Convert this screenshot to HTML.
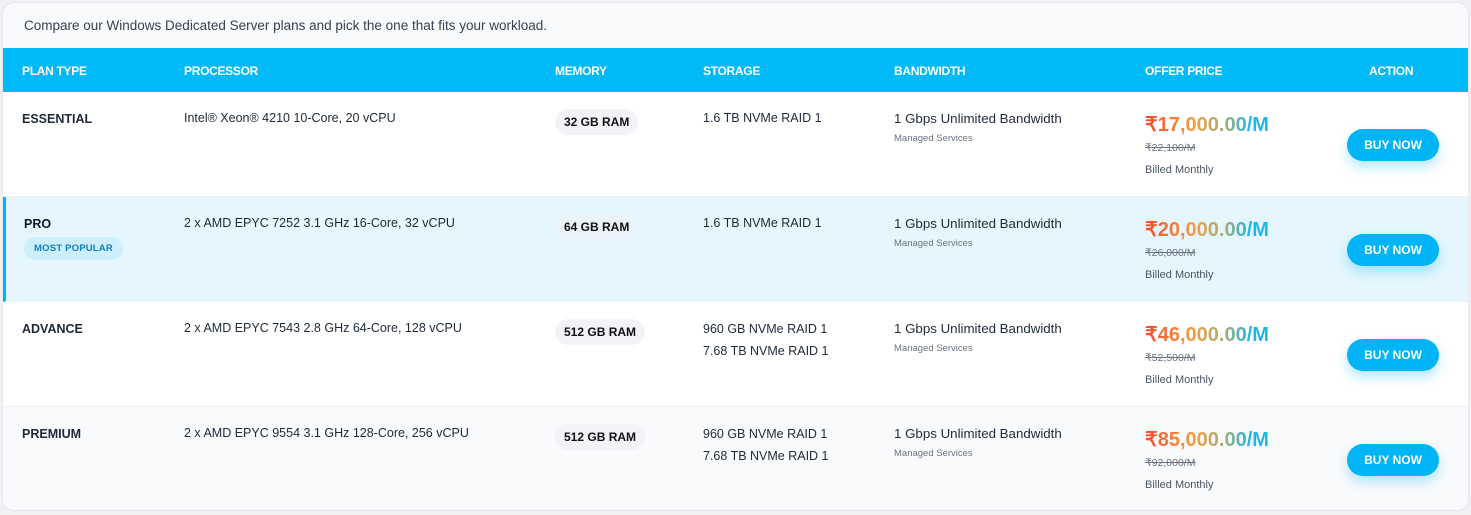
<!DOCTYPE html>
<html><head><meta charset="utf-8"><style>
*{box-sizing:border-box;margin:0;padding:0}
body{width:1471px;height:515px;background:#f0f1f3;font-family:"Liberation Sans",sans-serif;color:#1f2937;overflow:hidden;position:relative}
.box{position:absolute;left:2px;top:2px;width:1467px;height:509px;background:#f9fafb;border:1px solid #e5e7eb;border-radius:12px;overflow:hidden}
.intro{position:absolute;left:21px;top:15px;font-size:13.5px;color:#374151}
.hdr{position:absolute;left:0;top:45px;width:100%;height:44px;background:#00b9f7}
.hdr span{position:absolute;top:16px;font-size:12px;font-weight:bold;color:#fff;letter-spacing:-0.3px}
.row{position:absolute;left:0;width:100%;height:105px;border-bottom:1px solid #eef0f3}
.row .c{position:absolute;font-size:12.5px;color:#1f2937}
.plan{font-size:12.5px;font-weight:bold;color:#111827}
.pill{position:absolute;height:26px;border-radius:13px;background:#f1f3f7;font-size:12px;font-weight:bold;padding:0 9px;line-height:26px;color:#111}
.bw{font-size:13.3px;color:#1f2937}
.ms{font-size:9.5px;color:#6b7280;margin-top:7px}
.price{font-size:20px;font-weight:bold;background:linear-gradient(90deg,#f04e2d 0%,#f59e42 40%,#9db07a 65%,#1fb6e8 85%);-webkit-background-clip:text;background-clip:text;color:transparent;display:inline-block}
.old{font-size:10.5px;color:#6b7280;text-decoration:line-through;margin-top:5px}
.bill{font-size:11px;color:#4b5563;margin-top:10px}
.btn{position:absolute;left:1344px;width:92px;height:32px;border-radius:16px;background:#00b4f5;color:#fff;font-size:12px;font-weight:bold;text-align:center;line-height:32px;box-shadow:0 6px 12px rgba(0,180,245,0.3)}
.tag{display:inline-block;margin-top:6px;height:23px;line-height:23px;padding:0 10px;border-radius:12px;background:#cdeefd;color:#0a7fc2;font-size:9.5px;font-weight:bold;letter-spacing:0.2px}
</style></head><body>
<div class="box">
<div class="intro">Compare our Windows Dedicated Server plans and pick the one that fits your workload.</div>
<div class="hdr">
<span style="left:19px">PLAN TYPE</span><span style="left:181px">PROCESSOR</span><span style="left:552px">MEMORY</span><span style="left:700px">STORAGE</span><span style="left:891px">BANDWIDTH</span><span style="left:1142px">OFFER PRICE</span><span style="left:1366px">ACTION</span>
</div>

<div class="row" style="top:89px;background:#fff">
<div class="c plan" style="left:19px;top:20px">ESSENTIAL</div>
<div class="c" style="left:181px;top:19px">Intel® Xeon® 4210 10-Core, 20 vCPU</div>
<div class="pill" style="left:552px;top:17px">32 GB RAM</div>
<div class="c" style="left:700px;top:19px">1.6 TB NVMe RAID 1</div>
<div class="c" style="left:891px;top:19px"><div class="bw">1 Gbps Unlimited Bandwidth</div><div class="ms">Managed Services</div></div>
<div class="c" style="left:1142px;top:20px"><div class="price">₹17,000.00/M</div><div class="old">₹22,100/M</div><div class="bill">Billed Monthly</div></div>
<div class="btn" style="top:37px">BUY NOW</div>
</div>

<div class="row" style="top:194px;background:#e5f6fe;border-left:3px solid #00b4f5">
<div class="c" style="left:18px;top:20px"><div class="plan">PRO</div><div class="tag">MOST POPULAR</div></div>
<div class="c" style="left:178px;top:19px">2 x AMD EPYC 7252 3.1 GHz 16-Core, 32 vCPU</div>
<div class="pill" style="left:549px;top:17px;background:#e9f3f9">64 GB RAM</div>
<div class="c" style="left:697px;top:19px">1.6 TB NVMe RAID 1</div>
<div class="c" style="left:888px;top:19px"><div class="bw">1 Gbps Unlimited Bandwidth</div><div class="ms">Managed Services</div></div>
<div class="c" style="left:1139px;top:20px"><div class="price">₹20,000.00/M</div><div class="old">₹26,000/M</div><div class="bill">Billed Monthly</div></div>
<div class="btn" style="top:37px;left:1341px">BUY NOW</div>
</div>

<div class="row" style="top:299px;background:#fff">
<div class="c plan" style="left:19px;top:20px">ADVANCE</div>
<div class="c" style="left:181px;top:19px">2 x AMD EPYC 7543 2.8 GHz 64-Core, 128 vCPU</div>
<div class="pill" style="left:552px;top:17px">512 GB RAM</div>
<div class="c" style="left:700px;top:19px;line-height:22px;margin-top:-3px">960 GB NVMe RAID 1<br>7.68 TB NVMe RAID 1</div>
<div class="c" style="left:891px;top:19px"><div class="bw">1 Gbps Unlimited Bandwidth</div><div class="ms">Managed Services</div></div>
<div class="c" style="left:1142px;top:20px"><div class="price">₹46,000.00/M</div><div class="old">₹52,500/M</div><div class="bill">Billed Monthly</div></div>
<div class="btn" style="top:37px">BUY NOW</div>
</div>

<div class="row" style="top:404px;background:#f9fafb;border-bottom:none">
<div class="c plan" style="left:19px;top:20px">PREMIUM</div>
<div class="c" style="left:181px;top:19px">2 x AMD EPYC 9554 3.1 GHz 128-Core, 256 vCPU</div>
<div class="pill" style="left:552px;top:17px">512 GB RAM</div>
<div class="c" style="left:700px;top:19px;line-height:22px;margin-top:-3px">960 GB NVMe RAID 1<br>7.68 TB NVMe RAID 1</div>
<div class="c" style="left:891px;top:19px"><div class="bw">1 Gbps Unlimited Bandwidth</div><div class="ms">Managed Services</div></div>
<div class="c" style="left:1142px;top:20px"><div class="price">₹85,000.00/M</div><div class="old">₹92,000/M</div><div class="bill">Billed Monthly</div></div>
<div class="btn" style="top:37px">BUY NOW</div>
</div>
</div>
</body></html>
